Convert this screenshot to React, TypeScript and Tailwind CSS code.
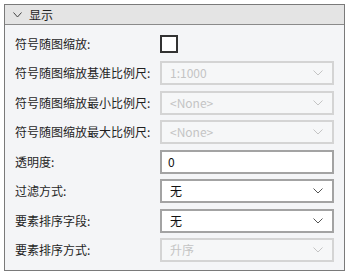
import React from "react";

const Chevron = ({ color }: { color: string }) => (
  <svg width="10" height="6" viewBox="0 0 10 6" className="shrink-0">
    <polyline points="0.5,0.5 5,5 9.5,0.5" fill="none" stroke={color} strokeWidth="1" />
  </svg>
);

const Label = ({ children }: { children: React.ReactNode }) => (
  <div className="text-[12px] text-[#1f1f1f] leading-none">{children}</div>
);

const Select = ({ value, disabled }: { value: string; disabled?: boolean }) => (
  <div
    className={
      disabled
        ? "h-[24px] w-[174px] border-2 border-[#d4d4d4] bg-[#f6f7f8] flex items-center pl-[8px] pr-[9px] justify-between"
        : "h-[24px] w-[174px] border-2 border-[#a3a3a3] bg-white flex items-center pl-[8px] pr-[9px] justify-between"
    }
  >
    <span className={disabled ? "text-[12px] text-[#c4c4c4] leading-none" : "text-[12px] text-[#111] leading-none"}>
      {value}
    </span>
    <Chevron color={disabled ? "#c4c4c4" : "#555"} />
  </div>
);

export default function App() {
  const rows: { label: string; ctrl: React.ReactNode }[] = [
    { label: "符号随图缩放基准比例尺:", ctrl: <Select value="1:1000" disabled /> },
    { label: "符号随图缩放最小比例尺:", ctrl: <Select value="<None>" disabled /> },
    { label: "符号随图缩放最大比例尺:", ctrl: <Select value="<None>" disabled /> },
    {
      label: "透明度:",
      ctrl: (
        <div className="h-[24px] w-[174px] border-2 border-[#a3a3a3] bg-white flex items-center pl-[6px]">
          <span className="text-[12px] text-[#111] leading-none">0</span>
        </div>
      ),
    },
    { label: "过滤方式:", ctrl: <Select value="无" /> },
    { label: "要素排序字段:", ctrl: <Select value="无" /> },
    { label: "要素排序方式:", ctrl: <Select value="升序" disabled /> },
  ];
  return (
    <div
      className="w-[349px] h-[275px] bg-white p-[4px] pr-[4px]"
      style={{ fontFamily: '"Noto Sans CJK SC", "Noto Sans", sans-serif' }}
    >
      <div className="w-[341px] h-[267px] border border-[#7a7a7a] bg-[#f4f5f7] flex flex-col">
        <div className="h-[20px] bg-[#e4e4e4] border-b border-[#8a8a8a] flex items-center pl-[8px] gap-[7px] shrink-0">
          <svg width="9" height="6" viewBox="0 0 9 6">
            <polyline points="0.5,0.5 4.5,5 8.5,0.5" fill="none" stroke="#444" strokeWidth="1" />
          </svg>
          <span className="text-[12px] text-[#1f1f1f] leading-none">显示</span>
        </div>
        <div className="flex flex-col pl-[10px] pt-[7px]">
          <div className="h-[24px] flex items-center">
            <div className="w-[145px]">
              <Label>符号随图缩放:</Label>
            </div>
            <div className="w-[18px] h-[18px] border-2 border-[#333] bg-white" />
          </div>
          <div className="flex flex-col gap-[5.5px] mt-[5px]">
            {rows.map((r, i) => (
              <div key={i} className="h-[24px] flex items-center">
                <div className="w-[145px]">
                  <Label>{r.label}</Label>
                </div>
                {r.ctrl}
              </div>
            ))}
          </div>
        </div>
      </div>
    </div>
  );
}
